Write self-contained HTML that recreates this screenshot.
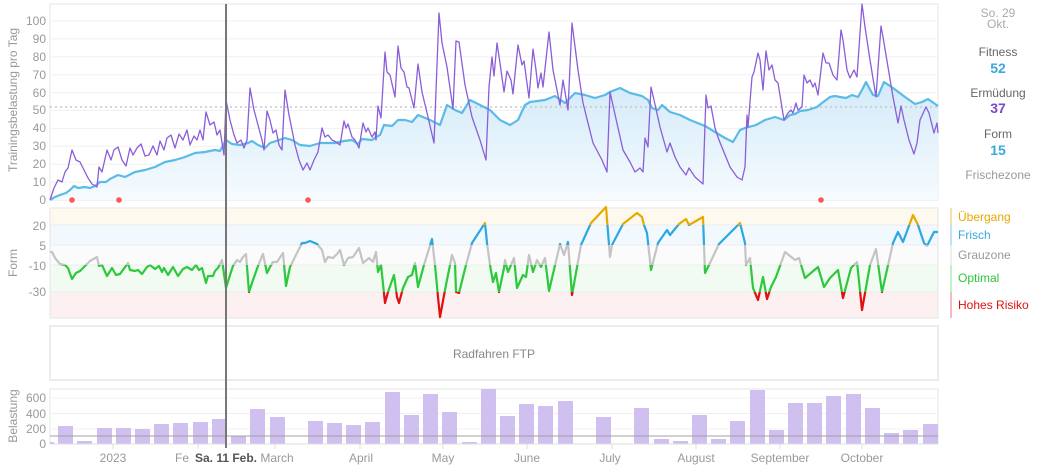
<!DOCTYPE html>
<html><head><meta charset="utf-8"><style>
body{margin:0;background:#fff;font-family:"Liberation Sans",sans-serif;}
svg text{font-family:"Liberation Sans",sans-serif;}
</style></head><body>
<svg width="1044" height="471" viewBox="0 0 1044 471" xmlns="http://www.w3.org/2000/svg">
<defs>
<linearGradient id="fg" x1="0" y1="0" x2="0" y2="1"><stop offset="0" stop-color="#d3eaf9"/><stop offset="1" stop-color="#f6fbfe"/></linearGradient>
<clipPath id="cO"><rect x="50" y="200" width="890" height="25"/></clipPath>
<clipPath id="cB"><rect x="50" y="225" width="890" height="20"/></clipPath>
<clipPath id="cG"><rect x="50" y="245" width="890" height="20"/></clipPath>
<clipPath id="cN"><rect x="50" y="265" width="890" height="27"/></clipPath>
<clipPath id="cR"><rect x="50" y="292" width="890" height="30"/></clipPath>
<polyline id="form" fill="none" stroke-width="2.2" stroke-linejoin="round" points="50,252 52,252 55,258 60,264 65,265 68,268 72,279 76,273 80,271 85,266 90,261 97,257 99,266 102,265 107,276 112,268 116,275 120,274 128,263 130,270 135,271 138,270 142,274 147,267 150,265 155,269 159,266 162,272 164,268 168,275 173,267 178,276 183,269 187,267 192,270 196,265 199,270 202,268 206,283 208,276 213,276 215,271 218,268 222,260 226,288 230,275 233,266 237,260 240,262 243,257 246,254 249,292 253,280 258,266 263,254 267,273 270,267 273,262 277,262 283,253 286,286 290,267 297,253 302,243 305,243 310,241 317,244 322,250 325,262 328,257 333,258 337,254 340,250 344,265 348,258 353,257 359,248 363,263 369,258 373,262 376,252 378,272 381,265 385,303 388,292 394,275 397,297 399,303 403,288 408,277 412,275 415,263 418,287 424,265 432,239 435,265 438,297 440,317 445,290 452,255 455,263 456,292 459,293 466,265 472,243 485,223 487,243 490,265 493,282 496,273 499,292 504,268 505,260 508,272 514,258 517,288 523,275 526,277 529,255 533,272 537,260 541,267 545,258 549,291 560,244 564,255 568,242 572,295 581,245 591,223 606,207 610,257 612,245 623,224 637,213 642,217 644,225 647,233 651,270 658,243 667,230 670,235 679,224 686,219 689,225 703,217 705,273 709,265 719,244 740,223 745,243 746,265 750,258 753,288 758,300 763,277 767,299 771,287 776,277 785,252 795,260 799,258 805,278 818,267 824,287 830,278 838,270 843,298 851,268 857,262 862,310 870,265 876,249 882,292 893,243 898,232 903,242 913,215 918,225 924,243 927,246 934,232 938,232"/>
</defs>
<!-- top chart -->
<rect x="50" y="4" width="888" height="196" fill="#fff" stroke="#e6e6e6"/>
<g stroke="#f0f0f0" stroke-width="1">
<line x1="50" x2="938" y1="182.1" y2="182.1"/><line x1="50" x2="938" y1="164.2" y2="164.2"/><line x1="50" x2="938" y1="146.3" y2="146.3"/><line x1="50" x2="938" y1="128.4" y2="128.4"/><line x1="50" x2="938" y1="110.5" y2="110.5"/><line x1="50" x2="938" y1="92.6" y2="92.6"/><line x1="50" x2="938" y1="74.7" y2="74.7"/><line x1="50" x2="938" y1="56.8" y2="56.8"/><line x1="50" x2="938" y1="38.9" y2="38.9"/><line x1="50" x2="938" y1="21" y2="21"/>
</g>
<g font-size="12" fill="#999" text-anchor="end">
<text x="46" y="204">0</text><text x="46" y="186">10</text><text x="46" y="168">20</text><text x="46" y="150">30</text><text x="46" y="132">40</text><text x="46" y="114">50</text><text x="46" y="97">60</text><text x="46" y="79">70</text><text x="46" y="61">80</text><text x="46" y="43">90</text><text x="46" y="25">100</text>
</g>
<text transform="translate(17,100) rotate(-90)" font-size="12" fill="#999" text-anchor="middle">Trainingsbelastung pro Tag</text>
<polygon fill="url(#fg)" points="50,200 50,200 55,197 60,195 66,193 70,190 74,186 78,188 85,187 90,188 95,186 100,182 106,182 110,179 118,175 125,177 135,172 145,170 155,167 165,162 175,160 185,157 195,153 205,152 215,150 220,151 226,140 232,144 240,145 248,143 252,141 258,145 265,148 270,143 285,138 292,140 300,145 310,146 320,143 335,143 344,141 352,140 358,144 362,139 372,140 376,137 380,135 384,125 392,126 398,120 405,120 412,122 418,115 430,120 440,125 447,105 455,110 462,113 470,100 480,105 490,110 500,120 510,125 518,120 525,105 530,102 545,100 555,96 565,103 575,93 585,95 595,98 605,95 610,92 620,88 630,93 642,96 648,100 652,108 658,110 662,105 670,112 680,115 690,120 705,126 715,132 725,138 733,142 740,130 745,128 756,125 765,120 775,117 784,120 790,115 795,114 800,111 808,110 817,107 822,103 830,97 835,96 840,97 846,98 852,95 858,97 862,90 866,82 873,95 878,96 884,82 893,88 905,97 915,104 922,102 928,99 938,106 938,200"/>
<line x1="50" x2="938" y1="107" y2="107" stroke="#c8c8c8" stroke-width="1.5" stroke-dasharray="2,3"/>
<polyline fill="none" stroke="#5bbbe8" stroke-width="2.2" stroke-linejoin="round" points="50,200 55,197 60,195 66,193 70,190 74,186 78,188 85,187 90,188 95,186 100,182 106,182 110,179 118,175 125,177 135,172 145,170 155,167 165,162 175,160 185,157 195,153 205,152 215,150 220,151 226,140 232,144 240,145 248,143 252,141 258,145 265,148 270,143 285,138 292,140 300,145 310,146 320,143 335,143 344,141 352,140 358,144 362,139 372,140 376,137 380,135 384,125 392,126 398,120 405,120 412,122 418,115 430,120 440,125 447,105 455,110 462,113 470,100 480,105 490,110 500,120 510,125 518,120 525,105 530,102 545,100 555,96 565,103 575,93 585,95 595,98 605,95 610,92 620,88 630,93 642,96 648,100 652,108 658,110 662,105 670,112 680,115 690,120 705,126 715,132 725,138 733,142 740,130 745,128 756,125 765,120 775,117 784,120 790,115 795,114 800,111 808,110 817,107 822,103 830,97 835,96 840,97 846,98 852,95 858,97 862,90 866,82 873,95 878,96 884,82 893,88 905,97 915,104 922,102 928,99 938,106"/>
<polyline fill="none" stroke="#8a5ed8" stroke-width="1.3" stroke-linejoin="round" points="50,200 54,188 58,180 62,182 65,172 68,168 72,150 76,160 80,162 84,170 88,178 92,184 97,187 99,167 102,172 107,150 111,160 114,150 118,147 122,160 126,166 130,148 133,155 137,148 141,144 145,156 149,155 153,146 157,155 160,141 164,150 167,138 171,135 175,148 179,134 183,140 187,130 190,145 194,136 197,140 200,130 203,140 206,112 210,125 214,122 217,135 220,130 224,155 226,100 230,120 234,135 237,143 241,140 244,148 247,140 250,88 254,110 258,125 262,140 264,150 267,111 270,120 273,133 276,130 279,145 282,150 285,90 289,115 292,130 295,145 299,160 303,170 307,163 310,170 314,160 318,152 322,128 325,137 328,135 332,140 336,142 340,145 344,121 346,128 348,124 352,137 355,140 359,148 363,123 366,132 368,128 372,137 375,132 376,140 378,106 381,118 385,52 387,72 390,75 395,97 398,46 401,68 404,72 407,87 409,88 414,108 418,64 422,92 428,117 434,143 439,13 442,43 447,67 453,109 456,41 459,42 465,85 472,117 480,140 486,160 489,87 492,57 494,76 497,43 500,63 504,92 507,71 511,80 513,94 518,45 522,65 524,61 529,98 533,49 536,70 538,88 541,73 543,87 549,32 553,70 560,105 563,80 568,110 572,23 578,70 583,103 593,143 602,160 607,172 610,92 614,110 623,150 630,162 635,172 640,168 643,172 645,138 648,147 651,87 654,100 660,127 667,152 670,143 675,157 680,167 686,175 689,168 695,177 703,184 706,95 708,108 711,106 715,128 719,140 730,167 737,177 742,180 745,167 747,115 748,127 752,77 754,72 758,53 760,60 763,90 766,51 769,70 772,65 775,80 778,83 784,120 788,113 791,110 793,113 796,103 798,110 802,107 804,75 807,83 810,80 813,87 815,83 818,95 823,53 826,63 829,63 833,75 837,80 841,30 843,40 847,70 850,78 854,70 857,77 862,4 865,27 870,60 876,97 881,26 883,37 888,67 893,97 898,123 901,106 904,120 909,140 914,154 917,143 920,120 926,107 929,113 934,133 937,123 938,133"/>
<g fill="#f55"><circle cx="72" cy="200" r="2.8"/><circle cx="119" cy="200" r="2.8"/><circle cx="308" cy="200" r="2.8"/><circle cx="821" cy="200" r="2.8"/></g>
<!-- form chart -->
<rect x="50" y="208" width="888" height="17" fill="#fdf9ef"/>
<rect x="50" y="225" width="888" height="20" fill="#f1f8fe"/>
<rect x="50" y="245" width="888" height="20" fill="#fbfbfb"/>
<rect x="50" y="265" width="888" height="27" fill="#f1fbf1"/>
<rect x="50" y="292" width="888" height="26" fill="#fcf0f0"/>
<g stroke="#ececec"><line x1="50" x2="938" y1="225" y2="225"/><line x1="50" x2="938" y1="245" y2="245"/><line x1="50" x2="938" y1="265" y2="265"/><line x1="50" x2="938" y1="292" y2="292"/></g>
<rect x="50" y="208" width="888" height="110" fill="none" stroke="#e6e6e6"/>
<g font-size="12" fill="#999" text-anchor="end"><text x="46" y="230">20</text><text x="46" y="250">5</text><text x="46" y="270">-10</text><text x="46" y="296">-30</text></g>
<text transform="translate(17,263) rotate(-90)" font-size="12" fill="#999" text-anchor="middle">Form</text>
<use href="#form" stroke="#e8a800" clip-path="url(#cO)"/>
<use href="#form" stroke="#2ea6e4" clip-path="url(#cB)"/>
<use href="#form" stroke="#c4c4c4" clip-path="url(#cG)"/>
<use href="#form" stroke="#2ec83e" clip-path="url(#cN)"/>
<use href="#form" stroke="#e01010" clip-path="url(#cR)"/>
<g stroke-width="2"><line x1="951" x2="951" y1="208" y2="225" stroke="#f6e2a8"/><line x1="951" x2="951" y1="225" y2="245" stroke="#bfe2f7"/><line x1="951" x2="951" y1="245" y2="265" stroke="#eee"/><line x1="951" x2="951" y1="265" y2="292" stroke="#c4efc8"/><line x1="951" x2="951" y1="292" y2="318" stroke="#f3bcbc"/></g>
<g font-size="12"><text x="958" y="221" fill="#e8a800">Übergang</text><text x="958" y="239" fill="#3aa8e0">Frisch</text><text x="958" y="259" fill="#999">Grauzone</text><text x="958" y="282" fill="#2ec43a">Optimal</text><text x="958" y="309" fill="#e01010">Hohes Risiko</text></g>
<!-- FTP -->
<rect x="50" y="326" width="888" height="54" fill="#fff" stroke="#ececec" stroke-width="2"/>
<text x="494" y="358" font-size="12" fill="#888" text-anchor="middle">Radfahren FTP</text>
<!-- bars -->
<rect x="50" y="389" width="888" height="55" fill="#fff" stroke="#e6e6e6"/>
<g stroke="#f0f0f0"><line x1="50" x2="938" y1="398" y2="398"/><line x1="50" x2="938" y1="413.5" y2="413.5"/><line x1="50" x2="938" y1="429" y2="429"/></g>
<g font-size="12" fill="#999" text-anchor="end"><text x="46" y="402">600</text><text x="46" y="418">400</text><text x="46" y="433">200</text><text x="46" y="448">0</text></g>
<text transform="translate(17,416) rotate(-90)" font-size="12" fill="#999" text-anchor="middle">Belastung</text>
<g fill="#d0c0ef">
<rect x="50" y="442" width="4" height="2"/><rect x="58" y="426" width="15" height="18"/><rect x="77" y="441" width="15" height="3"/><rect x="97" y="428" width="15" height="16"/><rect x="116" y="428" width="15" height="16"/><rect x="135" y="429" width="15" height="15"/><rect x="154" y="424" width="15" height="20"/><rect x="173" y="423" width="15" height="21"/><rect x="193" y="422" width="15" height="22"/><rect x="212" y="419" width="15" height="25"/><rect x="231" y="436" width="15" height="8"/><rect x="250" y="409" width="15" height="35"/><rect x="270" y="417" width="15" height="27"/><rect x="308" y="421" width="15" height="23"/><rect x="327" y="423" width="15" height="21"/><rect x="346" y="425" width="15" height="19"/><rect x="365" y="422" width="15" height="22"/><rect x="385" y="392" width="15" height="52"/><rect x="404" y="415" width="15" height="29"/><rect x="423" y="394" width="15" height="50"/><rect x="442" y="412" width="15" height="32"/><rect x="462" y="442" width="15" height="2"/><rect x="481" y="389" width="15" height="55"/><rect x="500" y="416" width="15" height="28"/><rect x="519" y="404" width="15" height="40"/><rect x="538" y="406" width="15" height="38"/><rect x="558" y="401" width="15" height="43"/><rect x="596" y="417" width="15" height="27"/><rect x="634" y="408" width="15" height="36"/><rect x="654" y="439" width="15" height="5"/><rect x="673" y="441" width="15" height="3"/><rect x="692" y="415" width="15" height="29"/><rect x="711" y="439" width="15" height="5"/><rect x="730" y="421" width="15" height="23"/><rect x="750" y="390" width="15" height="54"/><rect x="769" y="430" width="15" height="14"/><rect x="788" y="403" width="15" height="41"/><rect x="807" y="403" width="15" height="41"/><rect x="826" y="396" width="15" height="48"/><rect x="846" y="394" width="15" height="50"/><rect x="865" y="408" width="15" height="36"/><rect x="884" y="433" width="15" height="11"/><rect x="903" y="430" width="15" height="14"/><rect x="923" y="424" width="15" height="20"/>
</g>
<line x1="50" x2="938" y1="436" y2="436" stroke="#999" stroke-opacity="0.45" stroke-width="2"/>
<line x1="50" x2="938" y1="444" y2="444" stroke="#ddd"/>
<g stroke="#ddd"><line x1="113" x2="113" y1="444" y2="449"/><line x1="198" x2="198" y1="444" y2="449"/><line x1="275" x2="275" y1="444" y2="449"/><line x1="360" x2="360" y1="444" y2="449"/><line x1="443" x2="443" y1="444" y2="449"/><line x1="527" x2="527" y1="444" y2="449"/><line x1="612" x2="612" y1="444" y2="449"/><line x1="696" x2="696" y1="444" y2="449"/><line x1="780" x2="780" y1="444" y2="449"/><line x1="862" x2="862" y1="444" y2="449"/></g>
<g font-size="12" fill="#999" text-anchor="middle"><text x="113" y="462">2023</text><text x="182" y="462">Fe</text><text x="277" y="462">March</text><text x="361" y="462">April</text><text x="443" y="462">May</text><text x="527" y="462">June</text><text x="610" y="462">July</text><text x="696" y="462">August</text><text x="780" y="462">September</text><text x="862" y="462">October</text></g>
<rect x="194" y="450" width="65" height="16" fill="#fff"/>
<text x="226" y="462" font-size="12" font-weight="bold" fill="#555" text-anchor="middle">Sa. 11 Feb.</text>
<line x1="226" x2="226" y1="4" y2="448" stroke="#777" stroke-width="2"/>
<!-- right panel -->
<g text-anchor="middle" font-size="12">
<text x="998" y="17" fill="#aaa">So. 29</text><text x="998" y="28" fill="#aaa">Okt.</text>
<text x="998" y="56" fill="#666">Fitness</text><text x="998" y="73" fill="#3aa8e0" font-size="14" font-weight="bold">52</text>
<text x="998" y="97" fill="#666">Ermüdung</text><text x="998" y="113" fill="#7a48d0" font-size="14" font-weight="bold">37</text>
<text x="998" y="138" fill="#666">Form</text><text x="998" y="155" fill="#3aa8e0" font-size="14" font-weight="bold">15</text>
<text x="998" y="179" fill="#999">Frischezone</text>
</g>
</svg>
</body></html>
